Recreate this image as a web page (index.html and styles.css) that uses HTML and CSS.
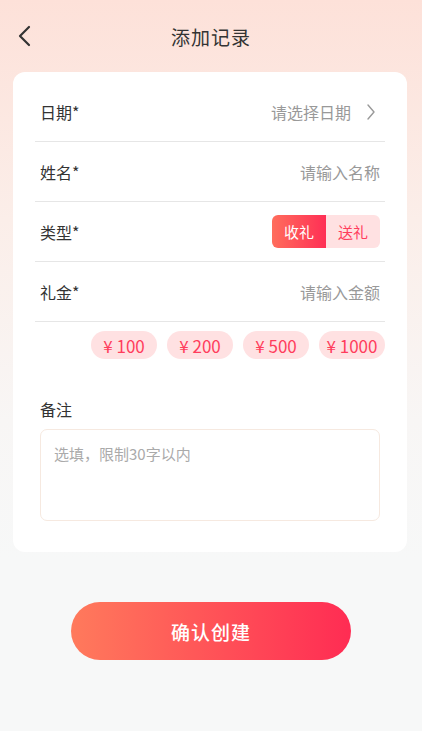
FILE: index.html
```html
<!DOCTYPE html>
<html lang="zh-CN">
<head>
    <meta charset="UTF-8">
    <meta name="viewport" content="width=device-width, initial-scale=1.0">
    <title>添加记录</title>
    <link rel="stylesheet" href="styles.css">
</head>
<body>

    <div class="header">
        <button class="back-btn">
            <svg width="16" height="22" viewBox="0 0 16 22">
                <polyline points="12,2 3,11 12,20" fill="none" stroke="#333" stroke-width="2.2" stroke-linecap="round" stroke-linejoin="round"/>
            </svg>
        </button>
        <div class="title">添加记录</div>
    </div>

    <div class="card">
        <div class="row">
            <span class="label">日期*</span>
            <span class="picker">
                请选择日期
                <svg width="10" height="16" viewBox="0 0 10 16">
                    <polyline points="2,1 8,8 2,15" fill="none" stroke="#999" stroke-width="1.4" stroke-linecap="round" stroke-linejoin="round"/>
                </svg>
            </span>
        </div>
        <div class="row">
            <span class="label">姓名*</span>
            <input class="field" type="text" placeholder="请输入名称">
        </div>
        <div class="row">
            <span class="label">类型*</span>
            <div class="toggle">
                <span class="toggle-item active">收礼</span>
                <span class="toggle-item">送礼</span>
            </div>
        </div>
        <div class="row">
            <span class="label">礼金*</span>
            <input class="field" type="text" placeholder="请输入金额">
        </div>

        <div class="chips">
            <span class="chip">¥ 100</span>
            <span class="chip">¥ 200</span>
            <span class="chip">¥ 500</span>
            <span class="chip">¥ 1000</span>
        </div>

        <div class="note-label">备注</div>
        <textarea class="note" placeholder="选填，限制30字以内"></textarea>
    </div>

    <div class="footer">
        <button class="submit">确认创建</button>
    </div>

</body>
</html>
```

FILE: styles.css
```css
* {
    box-sizing: border-box;
}

body, html {
    margin: 0;
    height: 100%;
}

body {
    font-family: "Noto Sans CJK SC", "Noto Sans", sans-serif;
    color: #333;
    background: linear-gradient(180deg, #fde1d9 0px, #fbeee9 220px, #f8f6f5 420px, #f7f8f8 560px);
}

.header {
    position: relative;
    height: 72px;
    display: flex;
    align-items: center;
    justify-content: center;
}

.back-btn {
    position: absolute;
    left: 17px;
    top: 25px;
    background: transparent;
    border: none;
    padding: 0;
    cursor: pointer;
}

.title {
    font-size: 19px;
    color: #333;
    letter-spacing: 1px;
}

.card {
    margin: 0 15px 0 13px;
    padding: 10px 22px 31px;
    background-color: #ffffff;
    border-radius: 12px;
}

.row {
    height: 60px;
    padding: 0 5px;
    display: flex;
    align-items: center;
    justify-content: space-between;
    border-bottom: 1px solid #e6e6e6;
}

.label {
    font-size: 16px;
    color: #333;
}

.picker {
    display: flex;
    align-items: center;
    gap: 15px;
    font-size: 16px;
    color: #999;
    padding-right: 4px;
}

.field {
    border: none;
    outline: none;
    text-align: right;
    font-family: inherit;
    font-size: 16px;
    color: #333;
    width: 160px;
    padding: 0;
    background: transparent;
}

.field::placeholder {
    color: #999;
}

.toggle {
    display: flex;
    height: 33px;
    border-radius: 6px;
    overflow: hidden;
}

.toggle-item {
    width: 54px;
    display: flex;
    align-items: center;
    justify-content: center;
    font-size: 15px;
    background-color: #ffe1e2;
    color: #ff3d5c;
}

.toggle-item.active {
    background: linear-gradient(90deg, #ff6d5c, #ff2f55);
    color: #fff;
}

.chips {
    display: flex;
    justify-content: flex-end;
    gap: 10px;
    margin-top: 9px;
}

.chip {
    width: 66px;
    height: 28px;
    border-radius: 14px;
    background-color: #ffe1e2;
    color: #ff3d5c;
    font-size: 17px;
    display: flex;
    align-items: center;
    justify-content: center;
}

.note-label {
    font-size: 16px;
    line-height: 22px;
    margin-top: 39px;
    padding-left: 5px;
}

.note {
    display: block;
    width: 340px;
    height: 92px;
    margin: 9px 0 0 5px;
    padding: 13px 13px;
    border: 1px solid #f6e9e0;
    border-radius: 7px;
    resize: none;
    outline: none;
    font-family: inherit;
    font-size: 15px;
    color: #333;
}

.note::placeholder {
    color: #aaa;
}

.footer {
    display: flex;
    justify-content: center;
    padding: 50px 0 0 0;
}

.submit {
    width: 280px;
    height: 58px;
    border: none;
    border-radius: 29px;
    background: linear-gradient(90deg, #ff7a5c, #ff2c53);
    color: #fff;
    font-family: inherit;
    font-size: 19px;
    font-weight: 500;
    letter-spacing: 1px;
    cursor: pointer;
}
```
